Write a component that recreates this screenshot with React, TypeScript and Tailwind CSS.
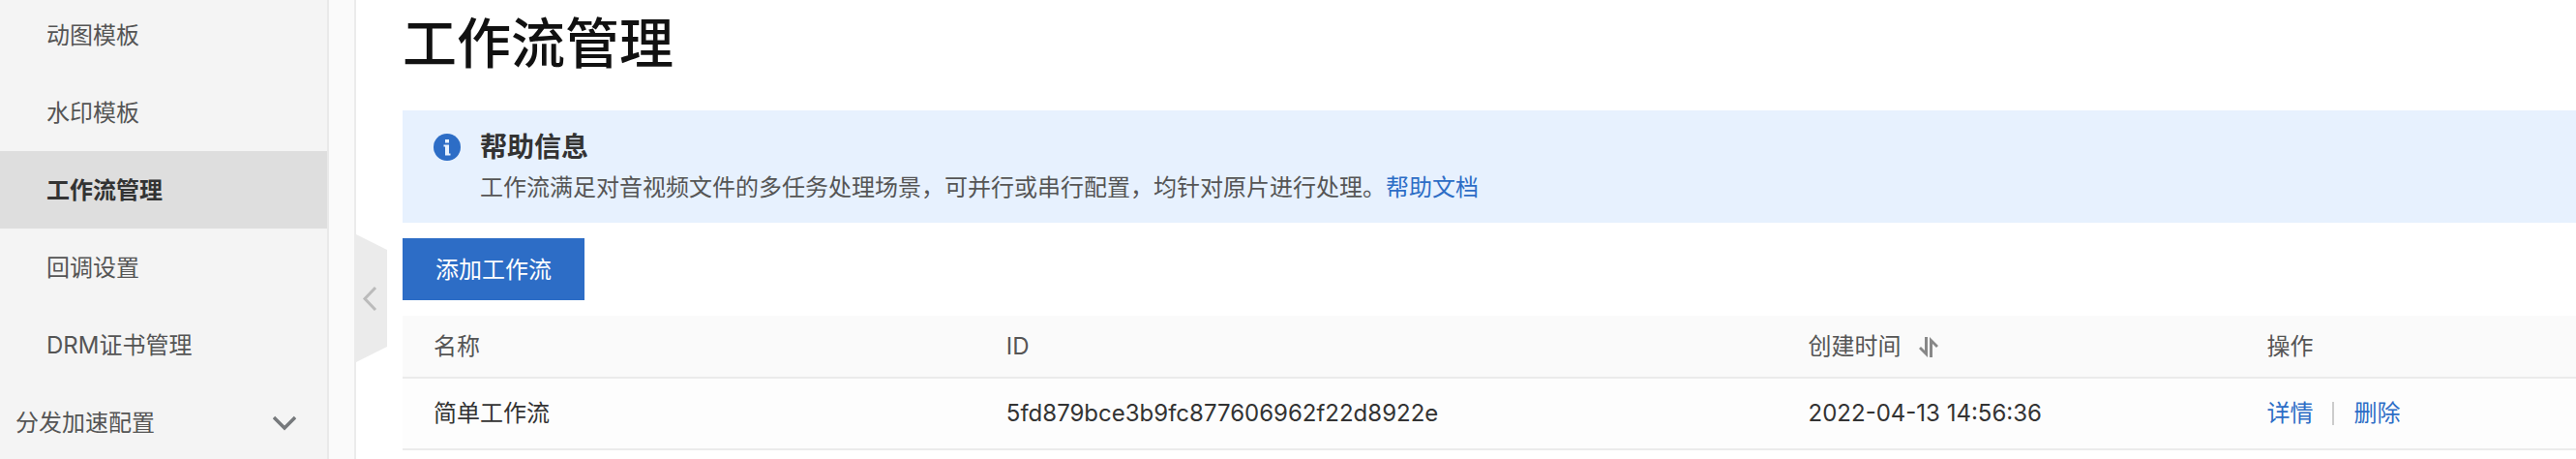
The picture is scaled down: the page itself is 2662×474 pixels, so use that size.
import React, { useState } from "react";

const NAV_ITEMS = ["动图模板", "水印模板", "工作流管理", "回调设置", "DRM证书管理"];

const WORKFLOWS = [
  {
    name: "简单工作流",
    id: "5fd879bce3b9fc877606962f22d8922e",
    createdAt: "2022-04-13 14:56:36",
  },
];

function Sidebar() {
  const [active, setActive] = useState("工作流管理");

  return (
    <nav className="w-[340px] shrink-0 border-r-2 border-[#e9e9e9] bg-[#f4f4f4]">
      <ul className="-mt-1">
        {NAV_ITEMS.map((item) => (
          <li key={item}>
            <a
              href="#"
              onClick={() => setActive(item)}
              className={
                item === active
                  ? "flex h-20 items-center bg-[#dedede] pt-0.5 pl-12 font-bold text-[#333333]"
                  : "flex h-20 items-center pt-0.5 pl-12 text-[#555555]"
              }
            >
              {item}
            </a>
          </li>
        ))}
        <li>
          <button
            type="button"
            className="flex h-20 w-full items-center justify-between pt-0.5 pr-8 pl-4 text-[#555555]"
          >
            分发加速配置
            <svg width="24" height="16" viewBox="0 0 24 16" fill="none" stroke="#76797c" strokeWidth="3.500">
              <path d="M1 2l11 11L23 2" />
            </svg>
          </button>
        </li>
      </ul>
    </nav>
  );
}

function HelpBanner() {
  return (
    <section className="flex gap-5 bg-[#e7f1fe] px-8 py-5">
      <svg className="mt-1 shrink-0" width="28" height="28" viewBox="0 0 28 28">
        <circle cx="14" cy="14" r="14" fill="#2d6dc6" />
        <path d="M12 6h4v3.500h-4zM10.500 11.500h5.500v9h1.500v2h-5.500v-9h-1.500z" fill="#e7f1fe" />
      </svg>
      <div>
        <h2 className="text-[28px] leading-9 font-bold text-[#333333]">帮助信息</h2>
        <p className="mt-2 leading-8 text-[#555555]">
          工作流满足对音视频文件的多任务处理场景，可并行或串行配置，均针对原片进行处理。
          <a href="#" className="text-[#2d6dc6]">
            帮助文档
          </a>
        </p>
      </div>
    </section>
  );
}

function WorkflowTable() {
  return (
    <table className="mt-4 w-full table-fixed border-separate border-spacing-0 text-left">
      <thead>
        <tr className="h-[65px] bg-[#fafafa] text-[#555555]">
          <th className="w-[26.35%] border-b-2 border-[#ebebeb] px-8 font-normal">名称</th>
          <th className="w-[36.9%] border-b-2 border-[#ebebeb] px-8 font-normal">ID</th>
          <th className="w-[21.1%] border-b-2 border-[#ebebeb] px-8 font-normal">
            <button type="button" className="flex items-center gap-4">
              创建时间
              <svg width="24" height="24" viewBox="0 0 24 24" fill="#888888">
                <path d="M8 2h3v21L2 14l2-2 4 4zM13 23V2l9 9-2 2-4-4v14z" />
              </svg>
            </button>
          </th>
          <th className="border-b-2 border-[#ebebeb] px-8 font-normal">操作</th>
        </tr>
      </thead>
      <tbody>
        {WORKFLOWS.map((row) => (
          <tr key={row.id} className="h-[74px] bg-[#fdfdfd] text-[#333333]">
            <td className="border-b-2 border-[#ebebeb] px-8">{row.name}</td>
            <td className="border-b-2 border-[#ebebeb] px-8">{row.id}</td>
            <td className="border-b-2 border-[#ebebeb] px-8">{row.createdAt}</td>
            <td className="border-b-2 border-[#ebebeb] px-8">
              <div className="flex items-center gap-5 text-[#2d6dc6]">
                <a href="#">详情</a>
                <span className="h-6 w-0.5 bg-[#cccccc]" />
                <a href="#">删除</a>
              </div>
            </td>
          </tr>
        ))}
      </tbody>
    </table>
  );
}

export default function App() {
  return (
    <div className="flex h-screen overflow-hidden bg-white font-[Inter,'Noto_Sans_CJK_SC',sans-serif] text-2xl">
      <Sidebar />
      <div className="w-7 shrink-0 border-r-2 border-[#ebebeb] bg-[#fafafa]" />
      <main className="relative min-w-0 flex-1 pl-12">
        {/* Sidebar collapse handle */}
        <button type="button" aria-label="收起" className="absolute top-[242px] left-0">
          <svg width="32" height="132" viewBox="0 0 32 132" fill="none">
            <path d="M0 0l32 16v100L0 132z" fill="#ebebeb" />
            <path d="M20 55L9 66.500 20 78" stroke="#bbbbbb" strokeWidth="3" />
          </svg>
        </button>

        <h1 className="pb-6 text-[56px] leading-[90px] font-medium text-[#111111]">工作流管理</h1>
        <HelpBanner />
        <button type="button" className="mt-4 h-16 bg-[#2d6dc6] px-[34px] pt-0.5 text-white">
          添加工作流
        </button>
        <WorkflowTable />
      </main>
    </div>
  );
}
